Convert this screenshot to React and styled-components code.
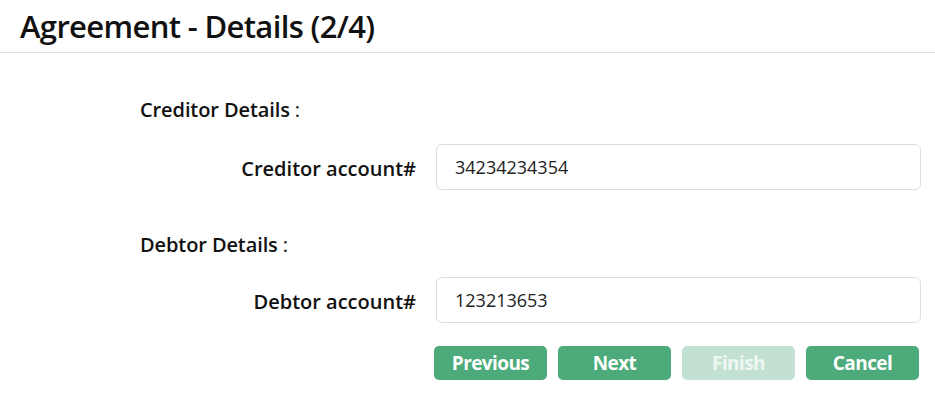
import styled, { createGlobalStyle } from 'styled-components';

const GlobalStyle = createGlobalStyle`
  body {
    margin: 0;
    background: #fff;
    color: #111;
    font-family: 'Open Sans', 'Noto Sans', sans-serif;
  }
`;

const Header = styled.header`
  height: 52px;
  padding: 0 20px;
  border-bottom: 1px solid #e2e2e2;
  display: flex;
  align-items: center;
`;

const Title = styled.h1`
  margin: 0;
  font-size: 31px;
  font-weight: 600;
  letter-spacing: -0.65px;
  line-height: 1;
  color: #111;
`;

const Body = styled.form`
  padding: 43px 14px 0 140px;
  display: flex;
  flex-direction: column;
`;

const SectionTitle = styled.div`
  height: 28px;
  line-height: 28px;
  font-size: 20px;
  font-weight: 600;
  letter-spacing: -0.1px;
  margin-top: ${(p) => p.$top || 0}px;

  span {
    font-weight: 400;
    margin-left: 5px;
  }
`;

const Row = styled.div`
  display: grid;
  grid-template-columns: 296px 1fr;
  align-items: center;
  margin-top: ${(p) => p.$top || 0}px;
`;

const Label = styled.label`
  text-align: right;
  padding: 3px 20px 0 0;
  font-size: 20px;
  font-weight: 600;
  letter-spacing: 0;
`;

const Input = styled.input`
  box-sizing: border-box;
  height: 46px;
  width: 100%;
  border: 1px solid #dedede;
  border-radius: 6px;
  padding: 0 18px;
  font-family: inherit;
  font-size: 18px;
  color: #222;
  outline: none;
`;

const Buttons = styled.div`
  display: flex;
  justify-content: flex-end;
  gap: 11px;
  margin-top: 23px;
  margin-right: 2px;
`;

const Button = styled.button`
  width: 113px;
  height: 34px;
  border: none;
  border-radius: 5px;
  background: ${(p) => (p.disabled ? '#c3e1d3' : '#4caa7b')};
  color: ${(p) => (p.disabled ? '#eef7f2' : '#fff')};
  font-family: inherit;
  font-size: 19px;
  font-weight: 700;
  letter-spacing: -0.6px;
  cursor: ${(p) => (p.disabled ? 'default' : 'pointer')};
`;

export default function App() {
  return (
    <>
      <GlobalStyle />
      <Header>
        <Title>Agreement - Details (2/4)</Title>
      </Header>
      <Body onSubmit={(e) => e.preventDefault()}>
        <SectionTitle>
          Creditor Details<span>:</span>
        </SectionTitle>
        <Row $top={20}>
          <Label htmlFor='creditor'>Creditor account#</Label>
          <Input id='creditor' defaultValue='34234234354' />
        </Row>
        <SectionTitle $top={41}>
          Debtor Details<span>:</span>
        </SectionTitle>
        <Row $top={18}>
          <Label htmlFor='debtor'>Debtor account#</Label>
          <Input id='debtor' defaultValue='123213653' />
        </Row>
        <Buttons>
          <Button type='button'>Previous</Button>
          <Button type='button'>Next</Button>
          <Button type='button' disabled>
            Finish
          </Button>
          <Button type='button'>Cancel</Button>
        </Buttons>
      </Body>
    </>
  );
}
